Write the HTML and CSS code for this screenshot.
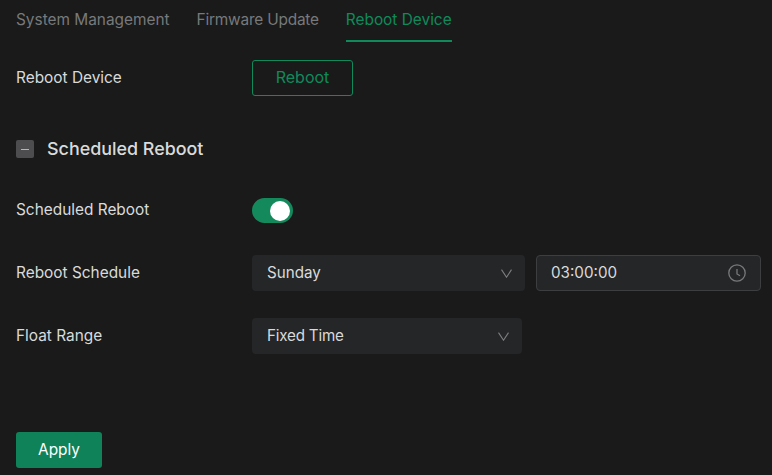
FILE: index.html
```html
<!DOCTYPE html>
<html lang="en">
<head>
<meta charset="utf-8">
<title>Reboot Device</title>
<link rel="stylesheet" href="styles.css">
</head>
<body>
<nav class="tabs">
  <a class="tab">System Management</a>
  <a class="tab tab-tight">Firmware Update</a>
  <a class="tab active">Reboot Device</a>
</nav>
<div class="row row-reboot">
  <span class="label">Reboot Device</span>
  <button class="btn-outline">Reboot</button>
</div>
<div class="section">
  <span class="collapse"><span class="collapse-bar"></span></span>
  <h2 class="section-title">Scheduled Reboot</h2>
</div>
<div class="row row-toggle">
  <span class="label">Scheduled Reboot</span>
  <span class="toggle"><span class="knob"></span></span>
</div>
<div class="row row-schedule">
  <span class="label">Reboot Schedule</span>
  <div class="select select-day">
    <span class="value">Sunday</span>
    <svg class="chevron" width="11" height="9" viewBox="0 0 11 9"><path d="M.5.6 5.5 8.2 10.5.6" fill="none" stroke="#7c7e80" stroke-width="1.1"/></svg>
  </div>
  <div class="time">
    <span class="value">03:00:00</span>
    <svg width="18" height="18" viewBox="0 0 18 18"><circle cx="9" cy="9" r="8.2" fill="none" stroke="#77797b" stroke-width="1.3"/><path d="M9 5v5l3 1.8" fill="none" stroke="#77797b" stroke-width="1.3"/></svg>
  </div>
</div>
<div class="row row-float">
  <span class="label">Float Range</span>
  <div class="select select-float">
    <span class="value value-tight">Fixed Time</span>
    <svg class="chevron" width="11" height="9" viewBox="0 0 11 9"><path d="M.5.6 5.5 8.2 10.5.6" fill="none" stroke="#7c7e80" stroke-width="1.1"/></svg>
  </div>
</div>
<button class="btn-apply">Apply</button>
</body>
</html>
```
FILE: styles.css
```css
* { box-sizing: border-box; }
html, body { height: 100%; }
body {
  margin: 0;
  padding: 0 0 0 16px;
  background: #1a1a1a;
  color: #d9dadb;
  font-family: Inter, "Noto Sans", sans-serif;
  font-size: 15.4px;
  overflow: hidden;
}
.tabs { display: flex; gap: 27px; height: 42px; }
.tab { color: #77797b; line-height: 39px; height: 42px; white-space: nowrap; }
.tab-tight { letter-spacing: -0.2px; }
.tab.active { color: #0f8a5b; border-bottom: 2px solid #0f8a5b; }
.row { display: flex; align-items: center; }
.label { width: 236px; flex: none; padding-bottom: 2px; }
.row-reboot { margin-top: 18px; height: 36px; }
.btn-outline {
  width: 101px; height: 36px; padding: 0 0 2px;
  background: transparent; color: #0f8a5b;
  border: 1px solid #0f8a5b; border-radius: 3px;
  font: inherit; font-size: 16px;
}
.section { display: flex; align-items: center; gap: 13px; margin-top: 44px; height: 18px; }
.collapse {
  width: 18px; height: 18px; border-radius: 2px; background: #4d4d4f;
  display: flex; align-items: center; justify-content: center;
}
.collapse-bar { width: 8px; height: 1px; background: #b5b6b7; }
.section-title { margin: 0 0 2px; font-size: 17.9px; font-weight: 500; color: #d9dadb; }
.row-toggle { margin-top: 40px; height: 25px; }
.toggle {
  width: 41px; height: 25px; border-radius: 13px; background: #148a5c;
  display: flex; align-items: center; justify-content: flex-end; padding-right: 3px;
}
.knob { width: 20px; height: 20px; border-radius: 50%; background: #fff; }
.row-schedule { margin-top: 32px; height: 36px; }
.value { font-size: 15.2px; padding-bottom: 2px; }
.value-tight { letter-spacing: -0.2px; }
.select {
  flex: none;
  height: 36px; border-radius: 4px; background: #252628;
  display: flex; align-items: center; justify-content: space-between;
  padding: 0 13px 0 15px;
}
.select-day { width: 273px; }
.select-float { width: 270px; }
.time {
  flex: none;
  width: 225px; height: 36px; margin-left: 11px;
  border: 1px solid #3d3e40; border-radius: 4px; background: #252628;
  display: flex; align-items: center; justify-content: space-between;
  padding: 0 14px 0 14px;
}
.row-float { margin-top: 27px; }
.btn-apply {
  display: block; margin-top: 78px;
  width: 86px; height: 36px; padding: 0 0 1px;
  background: #0f8259; color: #fff; border: 0; border-radius: 3px;
  font: inherit;
}
```
